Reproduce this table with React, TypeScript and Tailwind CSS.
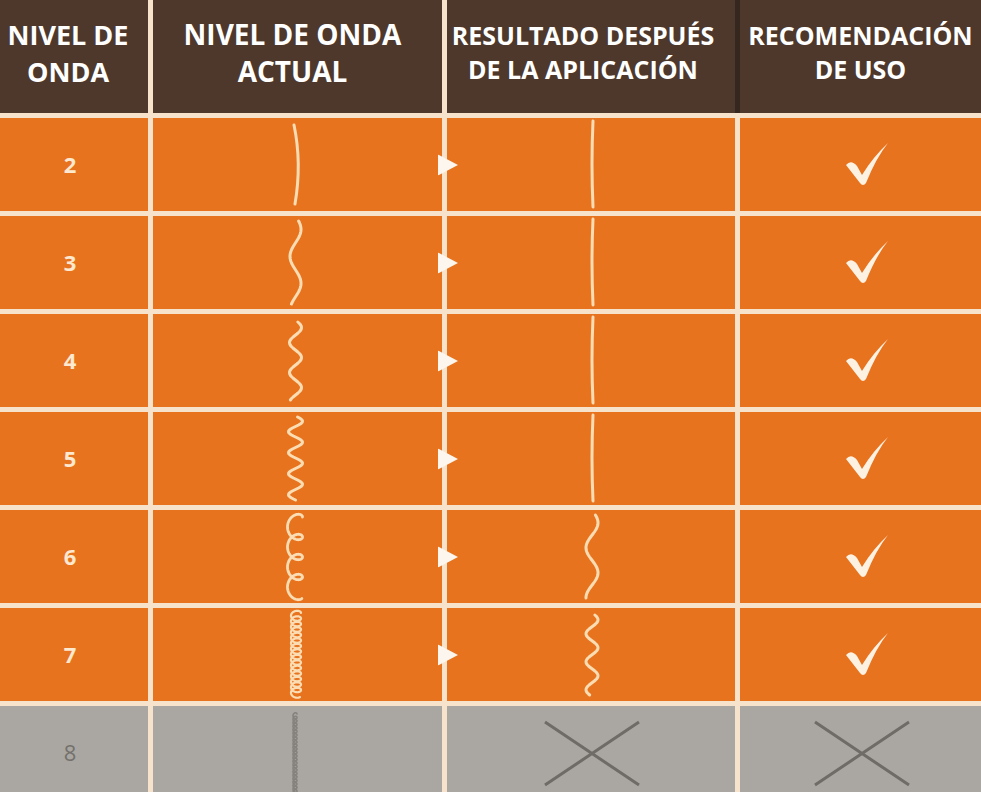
import * as React from "react"

const CREAM = "#fcdcb2"
const GREY_INK = "#6f6c68"

// wave along y: x = cx + a * sin(...)
function wavePath(cx: number, y0: number, y1: number, period: number, a: number, phase = 0) {
  let d = ""
  for (let y = y0; y <= y1 + 0.01; y += 1) {
    const x = cx + a * Math.sin(((y - y0) / period) * Math.PI * 2 + phase)
    d += `${d ? "L" : "M"}${x.toFixed(2)} ${y.toFixed(2)} `
  }
  return d
}

// looped curl (prolate trochoid running down)
function coilPath(cx: number, y0: number, y1: number, period: number, ax: number, ay: number) {
  const k = period / (Math.PI * 2)
  const tMax = (y1 - y0) / k
  let d = ""
  for (let t = 0; t <= tMax; t += 0.12) {
    const x = cx + ax * Math.cos(t)
    const y = y0 + k * t - ay * Math.sin(t)
    d += `${d ? "L" : "M"}${x.toFixed(2)} ${y.toFixed(2)} `
  }
  return d
}

function Strand({ d, color = CREAM, w = 3 }: { d: string; color?: string; w?: number }) {
  return (
    <svg width="40" height="93" viewBox="0 0 40 93" fill="none">
      <path d={d} stroke={color} strokeWidth={w} strokeLinecap="round" strokeLinejoin="round" />
    </svg>
  )
}

function Cross() {
  return (
    <svg width="100" height="93" viewBox="0 0 100 93" fill="none">
      <path d="M4 16 L98 79 M98 16 L4 79" stroke={GREY_INK} strokeWidth="3" />
    </svg>
  )
}

function Check() {
  return (
    <svg width="50" height="50" viewBox="0 0 50 50" className="ml-[14px]">
      <path
        d="M3 25 Q 8 19 14 26 L 19 35 Q 30 17 45 3 Q 33 18 23 43 Q 20 47 17 43 Z"
        fill="#fdf1e2"
      />
    </svg>
  )
}

function Arrow() {
  return (
    <svg
      width="20"
      height="21"
      viewBox="0 0 20 21"
      className="absolute left-[-9px] top-1/2 -translate-y-1/2"
    >
      <polygon points="0,0 20,10.5 0,21" fill="#fdf6ee" />
    </svg>
  )
}

type Row = {
  level: number
  current: React.ReactNode
  result: React.ReactNode
  ok: boolean
}

const straight = "M22 3 Q 20 46 22 89"

const rows: Row[] = [
  {
    level: 2,
    current: <Strand d="M16 7 Q 24 45 17 86" />,
    result: <Strand d={straight} />,
    ok: true,
  },
  {
    level: 3,
    current: <Strand d={wavePath(17.5, 5, 88, 54, 5.5, 0.6)} />,
    result: <Strand d={straight} />,
    ok: true,
  },
  {
    level: 4,
    current: <Strand d={wavePath(17.5, 8, 86, 30, 6, 0.4)} />,
    result: <Strand d={straight} />,
    ok: true,
  },
  {
    level: 5,
    current: <Strand d={wavePath(17.5, 5, 88, 21, 7, 0.3)} />,
    result: <Strand d={straight} />,
    ok: true,
  },
  {
    level: 6,
    current: <Strand d={coilPath(17, 7, 86, 20, 7.5, 7)} w={2.8} />,
    result: <Strand d={wavePath(21, 5, 88, 50, 6, 0.6)} />,
    ok: true,
  },
  {
    level: 7,
    current: <Strand d={coilPath(18, 5, 87, 5.5, 5, 3.5)} w={2.2} />,
    result: <Strand d={wavePath(21, 7, 87, 28, 6, 0.5)} />,
    ok: true,
  },
  {
    level: 8,
    current: <Strand d={coilPath(17, 8, 93, 3.5, 2, 2)} color="#85827e" w={1.6} />,
    result: <Cross />,
    ok: false,
  },
]

export default function App() {
  return (
    <div className="h-[792px] w-[981px] overflow-hidden bg-[#f7e3cb] font-['Open_Sans',sans-serif]">
      <div className="grid grid-cols-[148px_289px_288px_241px] grid-rows-[113px_repeat(7,93px)] gap-[5px]">
        {/* Header */}
        <div className="bg-[#4e382c] pr-[12px] pt-[16px] text-center text-[27px] font-bold leading-[37px] text-white">
          NIVEL DE
          <br />
          ONDA
        </div>
        <div className="bg-[#4e382c] pr-[10px] pt-[16px] text-center text-[28px] font-bold leading-[37px] text-white">
          NIVEL DE ONDA
          <br />
          ACTUAL
        </div>
        <div className="bg-[#4e382c] pr-[16px] pt-[18px] text-center text-[25px] font-bold leading-[34px] text-white">
          RESULTADO DESPUÉS
          <br />
          DE LA APLICACIÓN
        </div>
        <div className="bg-[#4e382c] pt-[18px] text-center text-[25px] font-bold leading-[34px] text-white shadow-[-5px_0_0_#35261e]">
          RECOMENDACIÓN
          <br />
          DE USO
        </div>

        {rows.map((r) => {
          const bg = r.ok ? "bg-[#e8731e]" : "bg-[#aaa7a2]"
          return (
            <React.Fragment key={r.level}>
              <div className={`${bg} flex items-center justify-center pr-[8px]`}>
                <span
                  className={
                    r.ok
                      ? "text-[22px] font-bold text-[#fde8d0]"
                      : "text-[22px] font-normal text-[#74716c]"
                  }
                >
                  {r.level}
                </span>
              </div>
              <div className={`${bg} flex items-center justify-center`}>{r.current}</div>
              <div className={`${bg} relative flex items-center justify-center`}>
                {r.ok && <Arrow />}
                {r.result}
              </div>
              <div className={`${bg} flex items-center justify-center`}>
                {r.ok ? <Check /> : <Cross />}
              </div>
            </React.Fragment>
          )
        })}
      </div>
    </div>
  )
}
